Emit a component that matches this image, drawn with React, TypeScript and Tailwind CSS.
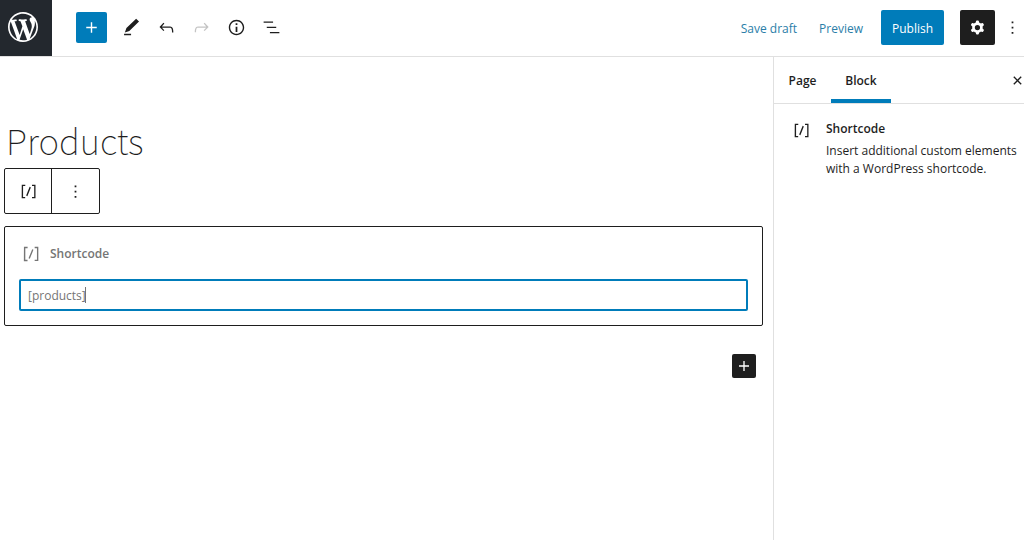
import { useState, type ReactNode } from 'react'

const ICONS = {
  plus: 'M18 11.2h-5.2V6h-1.6v5.2H6v1.6h5.2V18h1.6v-5.2H18z',
  edit: 'M20.6 5.2L17.3 2 6.2 12.6l-1.8 5 5.1-1.5L20.6 5.2zM3.5 20.8h8v-1.6h-8v1.6z',
  undo: 'M18.3 11.7c-.6-.6-1.4-.9-2.3-.9H6.7l2.9-3.3-1.1-1-4.5 5L8.5 16l1-1-2.7-2.7H16c.5 0 .9.2 1.3.5 1 1 1 3.4 1 4.5v.3h1.5v-.2c0-1.5 0-4.3-1.5-5.7z',
  redo: 'M15.6 6.5l-1.1 1 2.9 3.3H8c-.9 0-1.7.3-2.3.9-1.4 1.5-1.4 4.2-1.4 5.6v.2h1.5v-.3c0-1.1 0-3.5 1-4.5.3-.3.7-.5 1.3-.5h9.2L14.5 15l1.1 1.1 4.6-4.6-4.6-5z',
  info: 'M12 3.2c-4.8 0-8.8 3.9-8.8 8.8 0 4.8 3.9 8.8 8.8 8.8 4.8 0 8.8-3.9 8.8-8.8 0-4.8-4-8.8-8.8-8.8zm0 16c-4 0-7.2-3.3-7.2-7.2C4.8 8 8 4.8 12 4.8s7.2 3.3 7.2 7.2c0 4-3.2 7.2-7.2 7.2zM11 17h2v-6h-2v6zm0-8h2V7h-2v2z',
  listView: 'M13.8 5.2H3v1.5h10.8V5.2zm-3.6 12v1.5H21v-1.5H10.2zm7.2-6H6.6v1.5h10.8v-1.5z',
  cog: 'M10.289 4.836A1 1 0 0111.275 4h1.306a1 1 0 01.987.836l.244 1.466c.787.26 1.503.679 2.108 1.218l1.393-.522a1 1 0 011.216.437l.653 1.13a1 1 0 01-.23 1.273l-1.148.944a6.025 6.025 0 010 2.435l1.149.946a1 1 0 01.23 1.272l-.653 1.13a1 1 0 01-1.216.437l-1.394-.522c-.605.54-1.32.958-2.108 1.218l-.244 1.466a1 1 0 01-.987.836h-1.306a1 1 0 01-.986-.836l-.244-1.466a5.995 5.995 0 01-2.108-1.218l-1.394.522a1 1 0 01-1.217-.436l-.653-1.131a1 1 0 01.23-1.272l1.149-.946a6.026 6.026 0 010-2.435l-1.148-.944a1 1 0 01-.23-1.272l.653-1.131a1 1 0 011.217-.437l1.393.522a5.994 5.994 0 012.108-1.218l.244-1.466zM14.929 12a3 3 0 11-6 0 3 3 0 016 0z',
  more: 'M13 19h-2v-2h2v2zm0-6h-2v-2h2v2zm0-6h-2V5h2v2z',
  close: 'M12 13.06l3.712 3.713 1.061-1.06L13.061 12l3.712-3.712-1.06-1.06L12 10.938 8.288 7.227l-1.061 1.06L10.939 12l-3.712 3.712 1.06 1.061L12 13.061z',
  shortcode: 'M16 4.2v1.5h2.5v12.5H16v1.5h4V4.2h-4zM4.2 19.8h4v-1.5H5.8V5.8h2.5V4.2h-4l-.1 15.6zm5.1-3.1l1.4.6 4-10-1.4-.6-4 10z',
}

function Icon({ name, className = 'size-[21px]' }: { name: keyof typeof ICONS; className?: string }) {
  return (
    <svg viewBox="0 0 24 24" className={`shrink-0 ${className}`} fill="currentColor" aria-hidden="true">
      <path fillRule="evenodd" d={ICONS[name]} />
    </svg>
  )
}

function WordPressLogo() {
  return (
    <svg viewBox="-2 -2 24 24" className="size-9" fill="currentColor" aria-hidden="true">
      <path d="M20 10c0-5.51-4.49-10-10-10C4.48 0 0 4.49 0 10c0 5.52 4.48 10 10 10 5.51 0 10-4.48 10-10zM7.78 15.37L4.37 6.22c.55-.02 1.17-.08 1.17-.08.5-.06.44-1.13-.06-1.11 0 0-1.45.11-2.37.11-.18 0-.37 0-.58-.01C4.12 2.69 6.87 1.11 10 1.11c2.33 0 4.45.87 6.05 2.34-.68-.11-1.65.39-1.65 1.58 0 .74.45 1.36.9 2.1.35.61.55 1.36.55 2.46 0 1.49-1.4 5-1.4 5l-3.03-8.37c.54-.02.82-.17.82-.17.5-.05.44-1.25-.06-1.22 0 0-1.44.12-2.38.12-.87 0-2.33-.12-2.33-.12-.5-.03-.56 1.2-.06 1.22l.92.08 1.26 3.41zM17.41 10c.24-.64.74-1.87.43-4.25.7 1.29 1.05 2.71 1.05 4.25 0 3.29-1.73 6.24-4.4 7.78.97-2.59 1.94-5.2 2.92-7.78zM6.1 18.09C3.12 16.65 1.11 13.53 1.11 10c0-1.3.23-2.48.72-3.59C3.25 10.3 4.67 14.2 6.1 18.09zm4.03-6.63l2.58 6.98c-.86.29-1.76.45-2.71.45-.79 0-1.57-.11-2.29-.33.81-2.38 1.62-4.74 2.42-7.1z" />
    </svg>
  )
}

function ToolButton({ label, disabled, children }: { label: string; disabled?: boolean; children: ReactNode }) {
  return (
    <button
      type="button"
      aria-label={label}
      disabled={disabled}
      className="flex size-[31px] items-center justify-center disabled:text-[#c4c4c4]"
    >
      {children}
    </button>
  )
}

function Header() {
  return (
    <header className="flex h-[57px] items-center border-b border-[#e0e0e0]">
      <a href="#" aria-label="View pages" className="flex w-[52px] items-center self-stretch bg-[#23282e] pb-0.5 pl-[5px] text-white">
        <WordPressLogo />
      </a>
      <div className="flex flex-1 items-center pr-px pb-0.5">
        <button
          type="button"
          aria-label="Add block"
          className="ml-6 flex size-[31px] items-center justify-center rounded-xs bg-[#007cba] text-white"
        >
          <Icon name="plus" />
        </button>
        <div className="ml-[9px] flex gap-1">
          <ToolButton label="Edit"><Icon name="edit" /></ToolButton>
          <ToolButton label="Undo"><Icon name="undo" /></ToolButton>
          <ToolButton label="Redo" disabled><Icon name="redo" /></ToolButton>
          <ToolButton label="Details"><Icon name="info" /></ToolButton>
          <ToolButton label="List view"><Icon name="listView" /></ToolButton>
        </div>
        <div className="ml-auto flex items-center">
          <button type="button" className="pt-1 text-[#2a7ea8]">Save draft</button>
          <button type="button" className="ml-[22px] pt-1 text-[#2a7ea8]">Preview</button>
          <button type="button" className="ml-[18px] h-[35px] w-[63px] rounded-xs bg-[#007cba] pt-1 text-white">
            Publish
          </button>
          <button
            type="button"
            aria-label="Settings"
            className="ml-4 flex size-[35px] items-center justify-center rounded-xs bg-[#1e1e1e] text-white"
          >
            <Icon name="cog" />
          </button>
          <button type="button" aria-label="Options" className="ml-[7px]">
            <Icon name="more" />
          </button>
        </div>
      </div>
    </header>
  )
}

function ShortcodeBlock() {
  const [value, setValue] = useState('[products]')

  return (
    <section className="mt-3 rounded-xs border border-[#1e1e1e] px-3.5 pt-4 pb-3.5">
      <label htmlFor="shortcode" className="flex items-center gap-2 font-semibold text-[#757575]">
        <Icon name="shortcode" className="ml-px size-[22px]" />
        Shortcode
      </label>
      <div className="relative mt-3.5">
        <input
          id="shortcode"
          type="text"
          value={value}
          onChange={(e) => setValue(e.target.value)}
          className="block h-8 w-full rounded-xs border-2 border-[#007cba] px-[7px] text-[#757575] caret-transparent outline-none"
        />
        {/* Text cursor */}
        <span className="absolute top-2 left-[66px] h-4 w-px bg-[#757575]" />
      </div>
    </section>
  )
}

function Editor() {
  return (
    <main className="min-w-0 flex-1 pt-14 pr-2.5 pl-1">
      <h1 className="pb-px pl-0.5 font-['Noto_Sans_CJK_JP','Open_Sans',sans-serif] text-[35px] leading-[54px] font-thin text-[#1e1e1e]">
        Products
      </h1>
      <div className="flex h-[46px] w-fit rounded-xs border border-[#1e1e1e]">
        <button type="button" aria-label="Shortcode" className="flex w-[46px] items-center justify-center">
          <Icon name="shortcode" />
        </button>
        <button type="button" aria-label="More options" className="flex w-12 items-center justify-center border-l border-[#1e1e1e]">
          <Icon name="more" />
        </button>
      </div>
      <ShortcodeBlock />
      <div className="mt-7 flex justify-end pr-[7px]">
        <button
          type="button"
          aria-label="Add block"
          className="flex size-6 items-center justify-center rounded-xs bg-[#1e1e1e] text-white"
        >
          <Icon name="plus" className="size-5" />
        </button>
      </div>
    </main>
  )
}

function Sidebar() {
  return (
    <aside className="w-[251px] shrink-0 overflow-hidden border-l border-[#e0e0e0]">
      <div className="flex h-[47px] items-stretch border-b border-[#e0e0e0]">
        <button type="button" className="w-[57px] pt-0.5 font-semibold">Page</button>
        <button type="button" className="w-[60px] border-b-4 border-[#007cba] pt-1.5 font-semibold">Block</button>
        <button type="button" aria-label="Close settings" className="-mr-1 ml-auto">
          <Icon name="close" />
        </button>
      </div>
      <div className="flex gap-3.5 px-[17px] pt-4">
        <Icon name="shortcode" />
        <div className="-mr-4">
          <h2 className="font-semibold">Shortcode</h2>
          <p className="mt-1">Insert additional custom elements with a WordPress shortcode.</p>
        </div>
      </div>
    </aside>
  )
}

export default function App() {
  return (
    <div className="flex min-h-screen flex-col overflow-hidden bg-white font-['Open_Sans','Noto_Sans',sans-serif] text-[12px] leading-[18px] text-[#1e1e1e]">
      <Header />
      <div className="flex flex-1">
        <Editor />
        <Sidebar />
      </div>
    </div>
  )
}
